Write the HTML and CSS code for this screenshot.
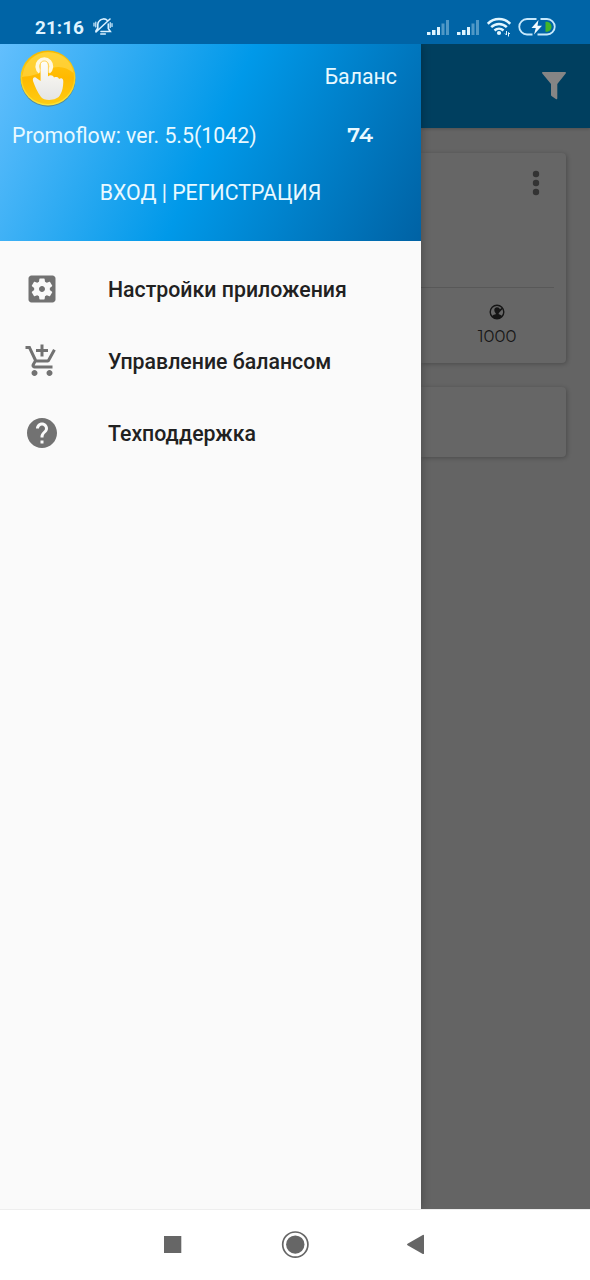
FILE: index.html
```html
<!DOCTYPE html>
<html lang="ru">
<head>
<meta charset="utf-8">
<title>Promoflow</title>
<link rel="stylesheet" href="styles.css">
</head>
<body>
<div class="screen">
  <header class="status">
    <span class="clock">21:16</span>
    <svg class="bell" width="20" height="20" viewBox="0 0 20 20" fill="none" stroke="#d9f0ff" stroke-width="1.6" stroke-linecap="round">
      <path d="M6.500 3.800C8 1.500 12.500 1.200 14.300 3.500M4.800 11V7.500C4.900 6.300 5.200 5.300 5.700 4.700M15.300 7v4.500L17.300 14.500H8M4.800 11L2.800 14.200M3 15L17 2M7.800 17h4.500"/><path d="M1 6v3M2.800 5v5M17.200 5.500v5M19 6.500v3" stroke-width="1.200"/>
    </svg>
    <div class="status-icons">
      <svg class="signal" width="23" height="17" viewBox="0 0 23 17" fill="#dff5ff">
        <path d="M0 13h3.500v3H0zM5 11h3.500v5H5zM10 8h3v8h-3z"/><path d="M14.500 4.500h3V16h-3zM19 1h3v15h-3z" opacity=".36"/>
      </svg>
      <svg class="signal second" width="23" height="17" viewBox="0 0 23 17" fill="#dff5ff">
        <path d="M0 13h3.500v3H0zM5 11h3.500v5H5zM10 8h3v8h-3z"/><path d="M14.500 4.500h3V16h-3zM19 1h3v15h-3z" opacity=".36"/>
      </svg>
      <svg class="wifi" width="24" height="20" viewBox="0 0 24 20" fill="none" stroke="#e1f6ff" stroke-width="2.500">
        <path d="M.8 6.800C7 .5 17 .5 23.200 6.800M4.200 10.200c4.400-4.300 11.200-4.300 15.600 0M7.500 13.500c2.600-2.500 6.400-2.500 9 0"/>
        <circle cx="12" cy="16" r="2.100" fill="#e1f6ff" stroke="none"/>
        <path d="M19.500 14v4m-1.500-1.500L19.500 18M21.500 19.500v-4m1.500 1.500L21.500 15.500" stroke-width="1"/>
      </svg>
      <svg class="battery" width="38" height="20" viewBox="0 0 38 20">
        <path d="M18.500 2H9a7.500 7.500 0 0 0 0 15.500h5.500M22.500 2H29a7.500 7.500 0 0 1 0 15.500H19.500" fill="none" stroke="#c6e8fc" stroke-width="1.800"/>
        <path d="M27.500 4.700h1c3 0 5 2.200 5 5s-2 5-5 5h-1z" fill="#43b629"/>
        <path d="M20.500 3L13.500 11h4.300L16 17.500l8-8.700h-4.500z" fill="#f2fbff"/>
      </svg>
    </div>
  </header>

  <main class="stage">
    <aside class="drawer">
      <div class="account">
        <div class="account-top">
          <svg class="logo" width="60" height="60" viewBox="0 0 60 60">
            <defs>
              <linearGradient id="gold" x1="0" y1="0" x2="0" y2="1"><stop offset="0" stop-color="#ffc914"/><stop offset=".5" stop-color="#ffb900"/><stop offset="1" stop-color="#ffcb12"/></linearGradient>
              <linearGradient id="rim" x1="0" y1="0" x2="0" y2="1"><stop offset="0" stop-color="#f7b900"/><stop offset="1" stop-color="#f9e43b"/></linearGradient>
              <linearGradient id="hand" x1="0" y1="0" x2="0" y2="1"><stop offset="0" stop-color="#fffdf5"/><stop offset="1" stop-color="#e5e5e5"/></linearGradient>
            </defs>
            <circle cx="30" cy="31.300" r="27.400" fill="#5b7770" opacity=".7"/>
            <circle cx="30" cy="30" r="27.500" fill="url(#rim)"/>
            <circle cx="30" cy="30" r="26" fill="url(#gold)"/>
            <path d="M6 21C12 7 25 2 37 5c10 2 17 10 18.500 20-8-7-17-8-27-3C19 27 12 28 4 29z" fill="#ffdc55" opacity=".55"/>
            <path d="M22 23.800A7 7 0 1 1 30.600 23.800" fill="none" stroke="#fff8df" stroke-width="4"/>
            <path d="M22.600 33V17c0-5 7.400-5 7.400 0v11.500C32 26.500 35 27 36 29.500 38 28.500 40.500 29 41 31c2.500-1.500 4.500-.5 4.300 3-.2 5-.8 9-3 12.500C40 53 26 53.500 23 49 19 44 17 38 15 33c-.8-3 1.500-5 4-2.500z" fill="url(#hand)"/>
            <path d="M22.200 25v-8c0-5.500 8.200-5.500 8.200 0v8" fill="none" stroke="#ffd667" stroke-width="1"/>
          </svg>
          <span class="balance-label">Баланс</span>
        </div>
        <div class="account-mid">
          <span class="version">Promoflow: ver. 5.5(1042)</span>
          <span class="balance">74</span>
        </div>
        <a class="login">ВХОД | РЕГИСТРАЦИЯ</a>
      </div>
      <nav class="menu">
        <a class="item">
          <svg class="item-icon" viewBox="0 0 24 24"><path d="M12 10c-1.100 0-2 .9-2 2s.9 2 2 2 2-.9 2-2-.9-2-2-2zm7-7H5c-1.110 0-2 .9-2 2v14c0 1.100.89 2 2 2h14c1.110 0 2-.9 2-2V5c0-1.100-.89-2-2-2zm-1.750 9c0 .23-.02.46-.05.68l1.480 1.160c.13.11.17.3.08.45l-1.400 2.420c-.09.15-.27.21-.43.15l-1.740-.7c-.36.28-.76.51-1.180.69l-.26 1.850c-.03.17-.18.3-.35.3h-2.800c-.17 0-.32-.13-.35-.29l-.26-1.850c-.43-.18-.82-.41-1.180-.69l-1.740.7c-.16.06-.34 0-.43-.15l-1.400-2.420c-.09-.15-.05-.34.08-.45l1.480-1.160c-.03-.23-.05-.46-.05-.69 0-.23.02-.46.05-.68l-1.480-1.160c-.13-.11-.17-.3-.08-.45l1.400-2.420c.09-.15.27-.21.43-.15l1.740.7c.36-.28.76-.51 1.180-.69l.26-1.850c.03-.17.18-.3.35-.3h2.800c.17 0 .32.13.35.29l.26 1.850c.43.18.82.41 1.180.69l1.740-.7c.16-.06.34 0 .43.15l1.400 2.420c.09.15.05.34-.08.45l-1.480 1.160c.03.23.05.46.05.69z"/></svg>
          <span class="item-text">Настройки приложения</span>
        </a>
        <a class="item">
          <svg class="item-icon" viewBox="0 0 24 24"><path d="M11 9h2V6h3V4h-3V1h-2v3H8v2h3v3zm-4 9c-1.100 0-1.990.9-1.990 2S5.900 22 7 22s2-.9 2-2-.9-2-2-2zm10 0c-1.100 0-1.990.9-1.990 2s.89 2 1.990 2 2-.9 2-2-.9-2-2-2zm-9.830-3.250l.03-.12.9-1.630h7.450c.75 0 1.410-.41 1.750-1.030l3.860-7.010L19.420 4h-.01l-1.100 2-2.760 5H8.530l-.13-.27L6.160 6l-.95-2-.94-2H1v2h2l3.600 7.590-1.350 2.450c-.16.28-.25.61-.25.960 0 1.100.9 2 2 2h12v-2H7.420c-.13 0-.25-.11-.25-.25z"/></svg>
          <span class="item-text">Управление балансом</span>
        </a>
        <a class="item">
          <svg class="item-icon" viewBox="0 0 24 24"><path d="M12 2C6.480 2 2 6.480 2 12s4.480 10 10 10 10-4.480 10-10S17.520 2 12 2zm1 17h-2v-2h2v2zm2.070-7.750l-.9.920C13.450 12.900 13 13.500 13 15h-2v-.5c0-1.100.45-2.100 1.170-2.830l1.240-1.260c.37-.36.590-.86.590-1.410 0-1.100-.9-2-2-2s-2 .9-2 2H8c0-2.210 1.790-4 4-4s4 1.790 4 4c0 .88-.36 1.680-.93 2.250z"/></svg>
          <span class="item-text">Техподдержка</span>
        </a>
      </nav>
    </aside>

    <section class="content">
      <div class="toolbar">
        <svg class="filter" width="24" height="28" viewBox="0 0 24 28" fill="#858585"><path d="M.8 0h22.400c.8 0 1 .8.500 1.400L15.300 12v14.300c0 1-.8 1.200-1.500.6L9.500 24c-.4-.3-.5-.7-.5-1.200V12L.3 1.400C-.2.800 0 0 .8 0z"/></svg>
      </div>
      <div class="cards">
        <article class="card stats">
          <svg class="more" width="8" height="26" viewBox="0 0 8 26" fill="#333"><circle cx="4" cy="4" r="3.200"/><circle cx="4" cy="13" r="3.200"/><circle cx="4" cy="22" r="3.200"/></svg>
          <div class="footer">
            <div class="count">
              <svg width="16" height="16" viewBox="0 0 16 16"><circle cx="8" cy="8" r="6.800" fill="none" stroke="#161616" stroke-width="1.400"/><path d="M2.800 12.600c1-2 2.800-2 3.900-2.400.5-.4 0-1-.6-1.700C5 7 4.700 3.500 8 3.300c1.700 0 2.600.8 2.800 2L13 3.700l.8 1-3.500 3.800c-.6.800-1 1.200-.4 1.700 1 .4 2.600.5 3.300 2.400C10.500 15.500 5.500 15.500 2.800 12.600z" fill="#161616"/></svg>
              <span class="count-text">1000</span>
            </div>
          </div>
        </article>
        <article class="card empty"></article>
      </div>
    </section>
  </main>

  <footer class="navbar">
    <svg class="nav-icon" width="30" height="30" viewBox="0 0 30 30"><path d="M6 6h17.300v17H6z"/></svg>
    <svg class="nav-icon" width="30" height="30" viewBox="0 0 30 30"><circle cx="15.300" cy="14.600" r="12.600" fill="none" stroke="#666" stroke-width="1.700"/><circle cx="15.300" cy="14.600" r="9.200"/></svg>
    <svg class="nav-icon" width="30" height="30" viewBox="0 0 30 30"><path d="M22 5.500v18a.8.800 0 0 1-1.200.4L5.500 15.300a1 1 0 0 1 0-1.600L20.800 4.900A.8.800 0 0 1 22 5.500z"/></svg>
  </footer>
</div>
</body>
</html>
```
FILE: styles.css
```css
* { box-sizing: border-box; }
body { margin: 0; font-family: Roboto, "Noto Sans", sans-serif; }
svg { display: block; flex: none; }
.screen { width: 590px; height: 1280px; display: grid; grid-template-rows: 44px 1165px 71px; overflow: hidden; }

.status { display: flex; align-items: flex-start; background: #0064a6; padding: 17px 34px 0 35px; }
.clock { font-size: 19px; line-height: 22px; font-weight: 700; color: #dff3ff; width: 50px; white-space: nowrap; }
.bell { margin-left: 8px; }
.status-icons { margin-left: auto; display: flex; }
.signal { margin-top: 2px; }
.second { margin-left: 7px; }
.wifi { margin-left: 7px; }
.battery { margin-left: 7px; }

.stage { display: grid; grid-template-columns: 421px 1fr; min-height: 0; overflow: hidden; }
.drawer { background: #fafafa; box-shadow: 0 0 9px rgba(0, 0, 0, .3); z-index: 1; }
.account { height: 197px; padding-top: 4px; background: linear-gradient(115deg, #63bffd 0%, #0099e9 50%, #0062a4 100%); color: #e9f9ff; }
.account-top { height: 60px; display: flex; justify-content: space-between; align-items: center; padding: 0 24px 0 18px; }
.balance-label { font-size: 21.3px; line-height: 24px; margin-top: -2px; }
.account-mid { display: flex; justify-content: space-between; padding: 15px 48px 0 12px; }
.version { font-size: 21.3px; line-height: 26px; }
.balance { font-family: Montserrat, Lato, sans-serif; font-size: 21px; line-height: 23px; font-weight: 600; }
.login { display: block; text-align: center; font-size: 21.3px; line-height: 26px; margin-top: 31px; }

.menu { padding-top: 12px; }
.item { height: 72px; display: flex; align-items: center; padding-left: 24px; }
.item-icon { width: 36px; height: 36px; fill: #727272; }
.item-text { margin-left: 48px; font-size: 21.3px; line-height: 26px; font-weight: 500; color: #212121; white-space: nowrap; padding-top: 1px; }

.content { background: #646464; }
.toolbar { height: 84px; background: #003f5f; display: flex; justify-content: flex-end; padding: 28px 24px 0 0; box-shadow: 0 1px 3px rgba(0, 0, 0, .2); }
.cards { display: grid; gap: 24px; padding: 25px 24px 0 0; }
.card { background: #666; border-radius: 0 4px 4px 0; box-shadow: 1px 1px 4px rgba(0, 0, 0, .25); }
.stats { height: 210px; display: flex; flex-direction: column; }
.more { align-self: flex-end; margin: 17px 26px 0 0; }
.footer { margin: 91px 12px 0 0; border-top: 1px solid #585858; padding-right: 31px; display: flex; justify-content: flex-end; }
.count { width: 52px; display: flex; flex-direction: column; align-items: center; padding-top: 16px; }
.count-text { font-family: Montserrat, Lato, sans-serif; font-size: 16.5px; line-height: 20px; color: #171717; margin-top: 6px; }
.empty { height: 70px; }

.navbar { background: #fff; border-top: 1px solid #eee; display: flex; justify-content: center; gap: 92px; padding-top: 20px; }
.nav-icon { fill: #666; }
```
